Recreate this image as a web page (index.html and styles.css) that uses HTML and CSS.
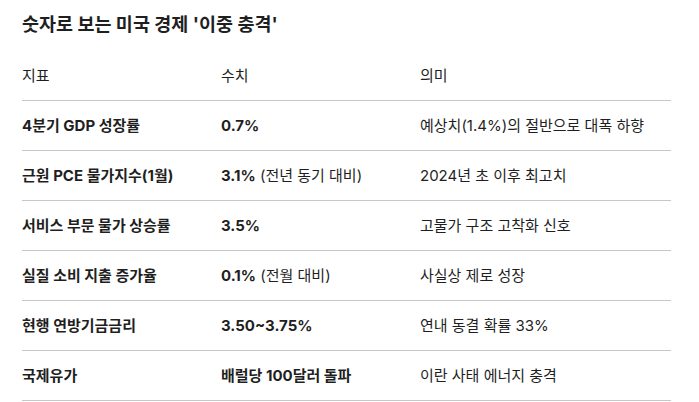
FILE: index.html
```html
<!DOCTYPE html>
<html lang="ko">
<head>
<meta charset="utf-8">
<link rel="stylesheet" href="styles.css">
</head>
<body>
<h2 class="title">숫자로 보는 미국 경제 '이중 충격'</h2>
<table class="data">
  <colgroup><col class="c1"><col class="c2"><col class="c3"></colgroup>
  <thead>
    <tr><th>지표</th><th>수치</th><th>의미</th></tr>
  </thead>
  <tbody>
    <tr><td><b>4분기 GDP 성장률</b></td><td><b>0.7%</b></td><td>예상치(1.4%)의 절반으로 대폭 하향</td></tr>
    <tr><td><b>근원 PCE 물가지수(1월)</b></td><td><b>3.1%</b> (전년 동기 대비)</td><td>2024년 초 이후 최고치</td></tr>
    <tr><td><b>서비스 부문 물가 상승률</b></td><td><b>3.5%</b></td><td>고물가 구조 고착화 신호</td></tr>
    <tr><td><b>실질 소비 지출 증가율</b></td><td><b>0.1%</b> (전월 대비)</td><td>사실상 제로 성장</td></tr>
    <tr><td><b>현행 연방기금금리</b></td><td><b>3.50~3.75%</b></td><td>연내 동결 확률 33%</td></tr>
    <tr><td><b>국제유가</b></td><td><b>배럴당 100달러 돌파</b></td><td>이란 사태 에너지 충격</td></tr>
  </tbody>
</table>
</body>
</html>
```
FILE: styles.css
```css
html, body {
  margin: 0;
  padding: 0;
  background: #ffffff;
}
body {
  padding: 10px 28px 0 22px;
  font-family: "Inter", "Noto Sans CJK KR", sans-serif;
  color: #1f1f1f;
}
.title {
  margin: 0;
  font-size: 18.5px;
  line-height: 28px;
  font-weight: 700;
}
.data {
  margin-top: 13px;
  width: 649px;
  border-collapse: collapse;
  table-layout: fixed;
  font-size: 15px;
}
.c1 { width: 199px; }
.c2 { width: 199px; }
.c3 { width: auto; }
.data th, .data td {
  text-align: left;
  padding: 0;
  height: 49px;
  line-height: 20px;
  vertical-align: middle;
  border-bottom: 1px solid #c7c7c7;
}
.data th {
  font-weight: 400;
}
.data b {
  font-weight: 700;
}
```
